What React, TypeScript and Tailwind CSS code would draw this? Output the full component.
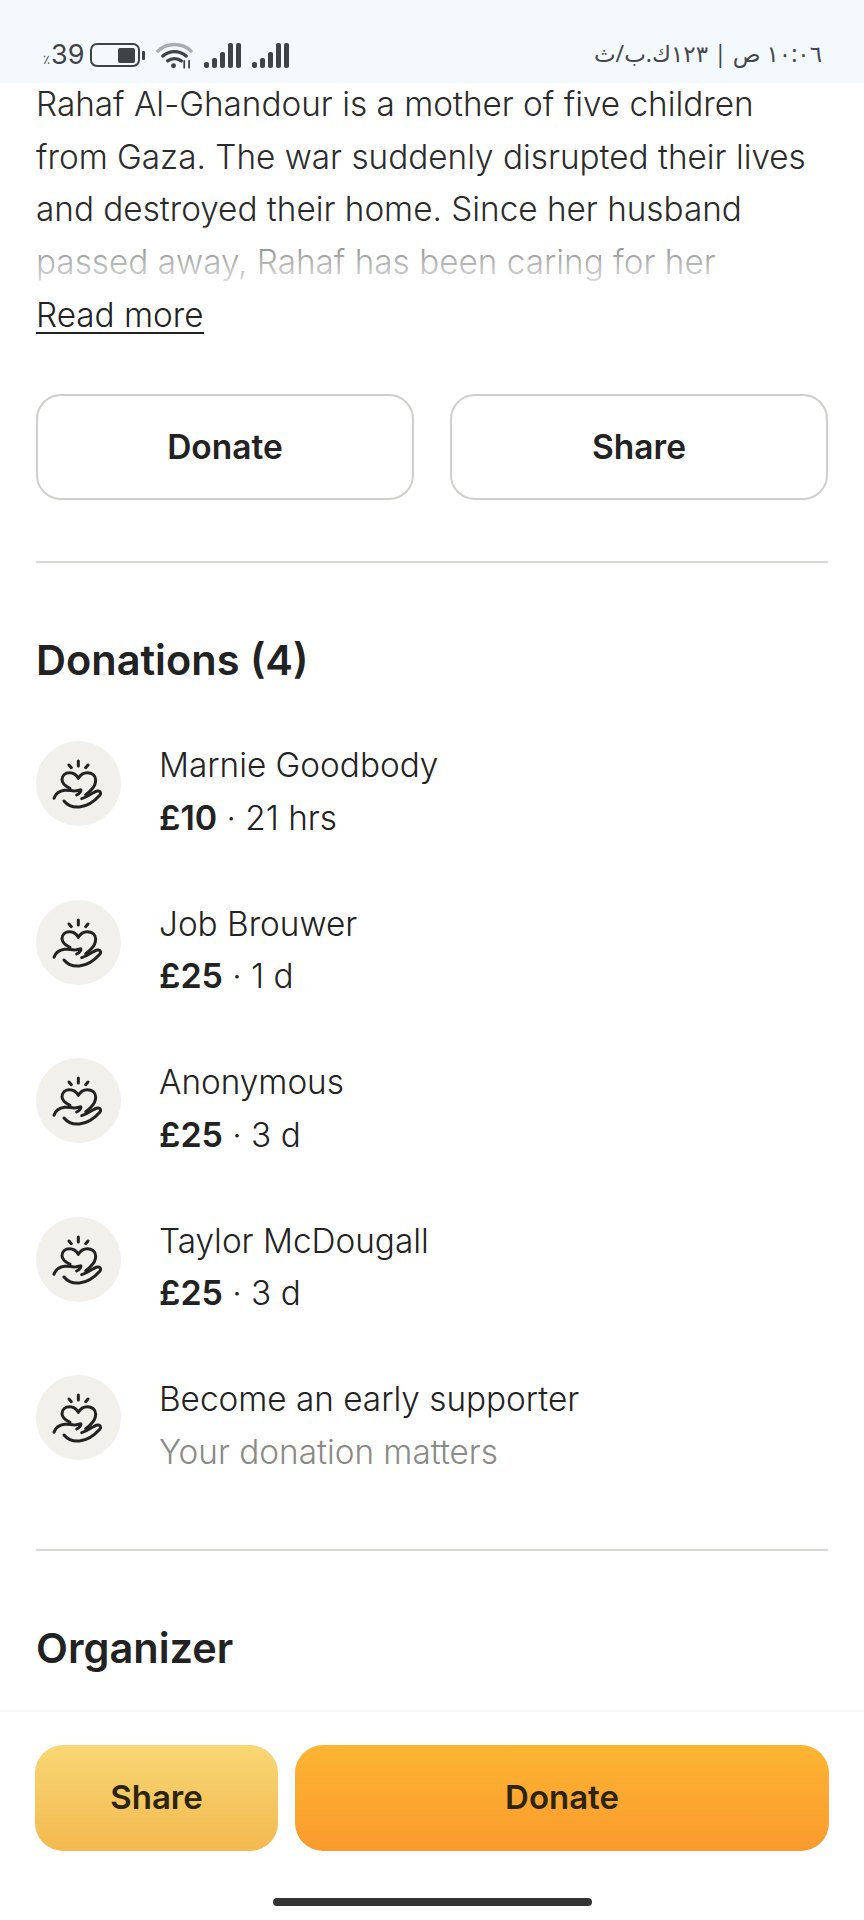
import React from 'react'

const FONT = "font-['Inter','Liberation_Sans',sans-serif]"

const donations = [
  { name: 'Marnie Goodbody', amount: '£10', when: '21 hrs' },
  { name: 'Job Brouwer', amount: '£25', when: '1 d' },
  { name: 'Anonymous', amount: '£25', when: '3 d' },
  { name: 'Taylor McDougall', amount: '£25', when: '3 d' },
]

const HeartHand: React.FC = () => (
  <svg viewBox="0 0 210 195" className="h-[65px] w-[70px]" fill="none" stroke="#222" strokeWidth="9" strokeLinecap="round" strokeLinejoin="round">
    <path d="M103 30v15M75 42l7 8M132 42l-7 8" />
    <path d="M78 112C62 104 54 96 54 86c0-13 10-21 23-21 11 0 20 6 26 17 6-11 15-17 27-17 14 0 25 9 25 22 0 11-4 20-13 29-5 6-11 11-17 15" />
    <path d="M30 142c4-12 16-22 32-24 14-2 24 4 36 1 5-1 10-3 12-3 3 2-3 12-12 16" />
    <path d="M60 150c10 12 26 20 46 18 24-2 46-18 62-36 4-6 1-13-7-12-14 2-28 18-48 23" />
  </svg>
)

const Badge: React.FC = () => (
  <div className="flex h-[85px] w-[85px] shrink-0 items-center justify-center rounded-full bg-[#f1f0eb]">
    <HeartHand />
  </div>
)

const Signal: React.FC = () => (
  <div className="flex h-[25px] items-end gap-[3px]">
    <span className="h-[6px] w-[5px] rounded-[2px] bg-[#3f4246]" />
    <span className="h-[10px] w-[5px] rounded-[2px] bg-[#3f4246]" />
    <span className="h-[16px] w-[5px] rounded-[2px] bg-[#3f4246]" />
    <span className="h-[25px] w-[5px] rounded-[2px] bg-[#3f4246]" />
    <span className="h-[25px] w-[5px] rounded-[2px] bg-[#3f4246]" />
  </div>
)

const StatusBar: React.FC = () => (
  <div className="flex h-[83px] shrink-0 items-start justify-between bg-[#f4f9fe] pl-[43px] pr-[42px] pt-[39px]">
    <div className="flex items-center text-[#3f4246]">
      <span className="mt-[8px] text-[13px] leading-none">٪</span>
      <span className="ml-[1px] text-[27px] leading-[32px]">39</span>
      <div className="ml-[6px] flex items-center">
        <div className="flex h-[24px] w-[50px] items-center justify-end rounded-[7px] border-2 border-[#3f4246] pr-[3px]">
          <div className="h-[15px] w-[17px] rounded-[2px] bg-[#3f4246]" />
        </div>
        <div className="ml-[2px] h-[9px] w-[3px] rounded-[1px] bg-[#3f4246]" />
      </div>
      <svg viewBox="0 0 38 28" className="ml-[11px] h-[28px] w-[37px]" fill="none" strokeLinecap="round">
        <path d="M2 10C11 1 27 1 36 10" stroke="#a9acb0" strokeWidth="3.500" />
        <path d="M7 15c7-6 17-6 24 0" stroke="#3f4246" strokeWidth="3.500" />
        <path d="M12 20c4-3 10-3 14 0" stroke="#3f4246" strokeWidth="3.500" />
        <circle cx="18" cy="25" r="2.500" fill="#3f4246" />
        <path d="M29 20v7M34 20v7" stroke="#3f4246" strokeWidth="1.800" />
      </svg>
      <div className="ml-[11px] flex gap-[11px]">
        <Signal />
        <Signal />
      </div>
    </div>
    <span dir="rtl" className="mt-[-1px] text-[23px] leading-[30px] text-[#45484c] font-['Noto_Sans','DejaVu_Sans',sans-serif]">
      ١٠:٠٦ ص | ١٢٣ك.ب/ث
    </span>
  </div>
)

export default function App() {
  return (
    <div className={`flex h-[1920px] w-[864px] flex-col overflow-hidden bg-white text-[#222] ${FONT}`}>
      <StatusBar />

      <main className="min-h-0 flex-1 px-[36px]">
        {/* story excerpt */}
        <div className="relative mt-[-5px] h-[211px] overflow-hidden text-[33.300px] font-[350] leading-[52.600px] text-[#2b2b2b]">
          <p className="whitespace-pre-line">
            {'Rahaf Al-Ghandour is a mother of five children\nfrom Gaza. The war suddenly disrupted their lives\nand destroyed their home. Since her husband\npassed away, Rahaf has been caring for her'}
          </p>
          <div className="absolute inset-x-0 bottom-0 h-[62px] bg-gradient-to-b from-white/30 to-white/90" />
        </div>
        <a className="mt-[9px] block w-fit border-b-2 border-[#222] text-[33.300px] font-[350] leading-[34px]">Read more</a>

        <div className="mt-[60px] flex gap-[36px]">
          <button className="h-[106px] flex-1 rounded-[25px] border-2 border-[#cfcfcc] text-[33.500px] font-semibold">Donate</button>
          <button className="h-[106px] flex-1 rounded-[25px] border-2 border-[#cfcfcc] text-[33.500px] font-semibold">Share</button>
        </div>

        <hr className="mt-[61px] border-t-2 border-[#d6d6d3]" />

        <h2 className="mt-[71px] text-[41.500px] font-semibold leading-[52px]">Donations (4)</h2>

        <ul className="mt-[55px] flex flex-col gap-[53.500px]">
          {donations.map((d) => (
            <li key={d.name} className="flex h-[105px] items-start gap-[38px]">
              <Badge />
              <div className="mt-[-2px] text-[33.300px] font-[350] leading-[52.600px]">
                <div>{d.name}</div>
                <div>
                  <span className="text-[34px] font-semibold">{d.amount}</span> · {d.when}
                </div>
              </div>
            </li>
          ))}
          <li className="flex h-[105px] items-start gap-[38px]">
            <Badge />
            <div className="mt-[-2px] text-[33.300px] font-[350] leading-[52.600px]">
              <div>Become an early supporter</div>
              <div className="text-[#8a8a86]">Your donation matters</div>
            </div>
          </li>
        </ul>

        <hr className="mt-[69px] border-t-2 border-[#d6d6d3]" />

        <h2 className="mt-[71px] text-[41.500px] font-semibold leading-[52px]">Organizer</h2>
      </main>

      {/* sticky footer */}
      <footer className="h-[210px] shrink-0 border-t-2 border-[#f8f8f6] bg-white">
        <div className="flex gap-[17px] pl-[35px] pr-[35px] pt-[33px]">
          <button className="h-[106px] w-[243px] rounded-[28px] bg-gradient-to-b from-[#f7d774] to-[#f3b94e] text-[33px] font-semibold text-[#2b2410]">Share</button>
          <button className="h-[106px] flex-1 rounded-[28px] bg-gradient-to-b from-[#fdb532] to-[#fa9a2e] text-[33px] font-semibold text-[#2b2410]">Donate</button>
        </div>
        <div className="mx-auto mt-[47px] h-[8px] w-[319px] rounded-full bg-[#333]" />
      </footer>
    </div>
  )
}
